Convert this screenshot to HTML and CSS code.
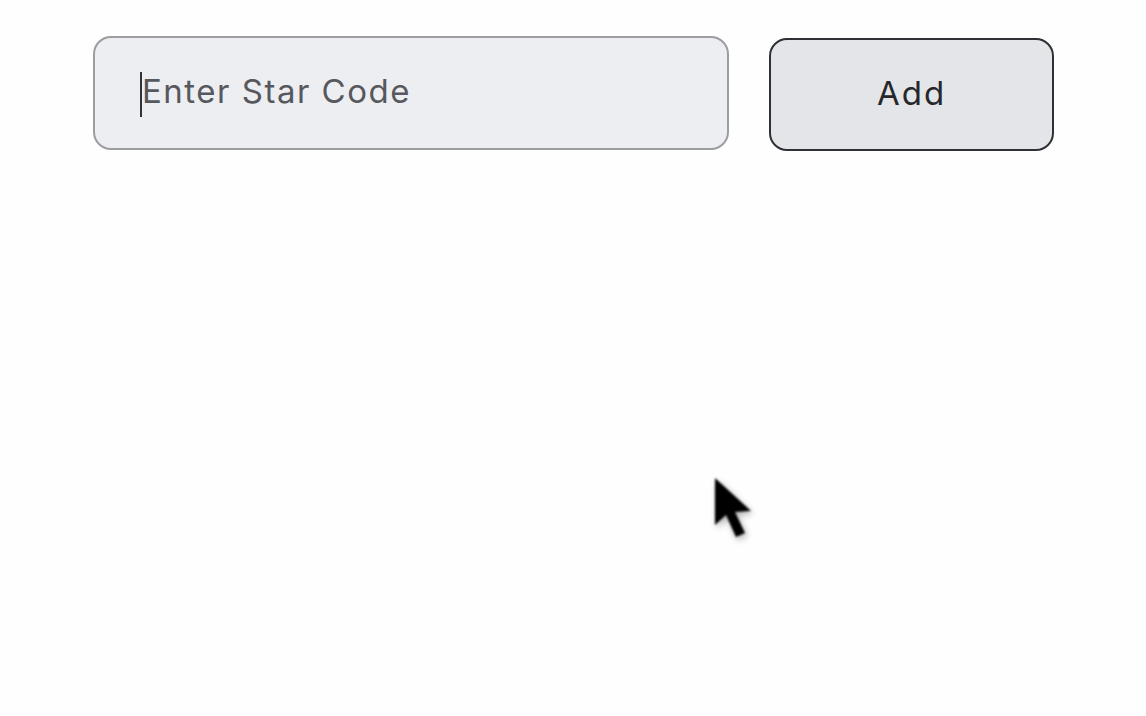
FILE: index.html
```html
<!DOCTYPE html>
<html>
<head>
<meta charset="utf-8">
<link rel="stylesheet" href="styles.css">
</head>
<body>
<div class="row">
  <div class="field">
    <span class="caret"></span>
    <span class="placeholder">Enter Star Code</span>
  </div>
  <button class="add">Add</button>
</div>
<svg class="pointer" width="60" height="80" viewBox="0 0 60 80">
  <defs>
    <filter id="sh" x="-50%" y="-50%" width="200%" height="200%">
      <feGaussianBlur stdDeviation="3.5"/>
    </filter>
    <filter id="soft" x="-20%" y="-20%" width="140%" height="140%">
      <feGaussianBlur stdDeviation="0.8"/>
    </filter>
  </defs>
  <path d="M10 7 L10 54 L21 44 L31 66 L40 62 L30 41 L46 40 Z" fill="#000" opacity="0.3" filter="url(#sh)"/>
  <path d="M8 4 L8 51 L19 41 L29 63 L38 59 L28 38 L44 37 Z" fill="#000" filter="url(#soft)"/>
</svg>
</body>
</html>
```
FILE: styles.css
```css
html, body {
  margin: 0;
  padding: 0;
  background: #fefefe;
  width: 1146px;
  height: 716px;
  overflow: hidden;
  font-family: "Inter", "Liberation Sans", sans-serif;
}
.row {
  display: flex;
  align-items: flex-start;
  gap: 40px;
  padding: 36px 0 0 93px;
}
.field {
  box-sizing: border-box;
  width: 636px;
  height: 114px;
  background: #eceef2;
  border: 2px solid #9c9da0;
  border-radius: 18px;
  display: flex;
  align-items: center;
  padding-left: 47px;
  position: relative;
}
.caret {
  width: 2px;
  height: 45px;
  background: #333;
  position: absolute;
  left: 45px;
  top: 34px;
}
.placeholder {
  font-size: 33px;
  color: #56585d;
  letter-spacing: 1.5px;
  margin-top: -4px;
}
.add {
  box-sizing: border-box;
  margin-top: 2px;
  width: 285px;
  height: 113px;
  background: #e3e5e9;
  border: 2.5px solid #2e3033;
  border-radius: 18px;
  font-family: "Inter", "Liberation Sans", sans-serif;
  font-size: 33px;
  letter-spacing: 2px;
  color: #26272a;
  padding: 0 0 4px 0;
}
.pointer {
  position: absolute;
  left: 707px;
  top: 474px;
}
```
